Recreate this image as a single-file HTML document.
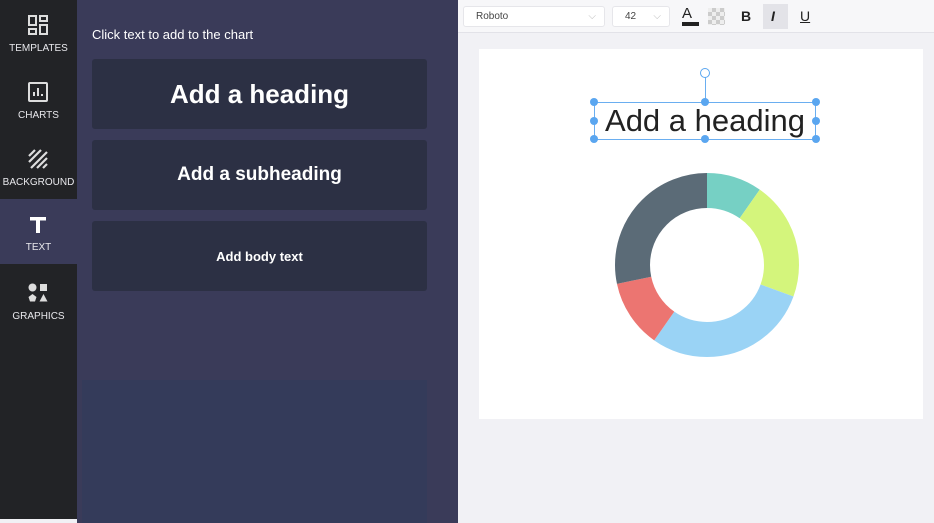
<!DOCTYPE html>
<html><head><style>
*{margin:0;padding:0;box-sizing:border-box}
body{width:934px;height:523px;overflow:hidden;font-family:"Liberation Sans",Arial,sans-serif;background:#f1f1f5;position:relative}
.side{position:absolute;left:0;top:0;width:77px;height:519px;background:#222326}
.item{position:absolute;left:0;width:77px;height:65px;color:#e8e8ec;font-size:10px;text-align:center}
.item .lbl{position:absolute;left:0;right:0;top:43px}
.item svg{position:absolute;left:27px;top:14px}
.panel{position:absolute;left:77px;top:0;width:381px;height:523px;background:#3a3b59}
.low{position:absolute;left:82px;top:380px;width:345px;height:143px;background:#343b5a}
.panel h4{position:absolute;left:15px;top:27px;font-weight:normal;color:#fff;font-size:13px}
.btn{position:absolute;left:15px;width:335px;height:70px;background:#2c3044;border-radius:3px;color:#fff;font-weight:bold;display:flex;align-items:center;justify-content:center}
.tool{position:absolute;left:458px;top:0;width:476px;height:33px;background:#f7f7f9;border-bottom:1px solid #e2e2e8}
.sel{position:absolute;top:6px;height:21px;background:#fff;border:1px solid #e6e6ea;border-radius:3px;font-size:10px;color:#444;padding:4px 0 0 12px}
.canvas{position:absolute;left:479px;top:49px;width:444px;height:370px;background:#fff}
.h{position:absolute;left:594px;top:102px;width:222px;height:38px;border:1px solid #6aaef0;font-size:31px;color:#222;text-align:center;line-height:36px}
.d{position:absolute;width:8px;height:8px;border-radius:50%;background:#5aa6f0}
</style></head><body>
<div class="side">
 <div class="item" style="top:0"><svg width="22" height="22" viewBox="0 0 22 22" fill="none" stroke="#ddd" stroke-width="2"><rect x="2" y="2" width="7" height="9"/><rect x="13" y="2" width="7" height="5"/><rect x="2" y="15" width="7" height="5"/><rect x="13" y="11" width="7" height="9"/></svg><div class="lbl">TEMPLATES</div></div>
 <div class="item" style="top:67px"><svg width="22" height="22" viewBox="0 0 22 22" fill="none" stroke="#ddd" stroke-width="2"><rect x="2" y="2" width="18" height="18" rx="1"/><path d="M7 15v-4M11 15V7M15 15v-2"/></svg><div class="lbl">CHARTS</div></div>
 <div class="item" style="top:134px"><svg width="22" height="22" viewBox="0 0 22 22" stroke="#ddd" stroke-width="2.2"><path d="M2 8l6-6M2 14L14 2M4 20L20 4M10 20l10-10M16 20l4-4"/></svg><div class="lbl">BACKGROUND</div></div>
 <div class="item" style="top:199px;background:#3a3b59"><svg width="22" height="22" viewBox="0 0 22 22"><path d="M3 4h16v3.5h-6V20H9V7.5H3z" fill="#fff"/></svg><div class="lbl">TEXT</div></div>
 <div class="item" style="top:268px"><svg width="22" height="22" viewBox="0 0 22 22" fill="#ddd"><circle cx="5.5" cy="5.5" r="4"/><rect x="13" y="2" width="7" height="7"/><path d="M5.5 12l4 3-1.5 4.5h-5L1.5 15z"/><path d="M16.5 12l4 7.5h-8z"/></svg><div class="lbl">GRAPHICS</div></div>
</div>
<div class="panel">
 <h4>Click text to add to the chart</h4>
 <div class="btn" style="top:59px;font-size:26px">Add a heading</div>
 <div class="btn" style="top:140px;font-size:19px">Add a subheading</div>
 <div class="btn" style="top:221px;font-size:13px">Add body text</div>
</div>
<div class="low"></div>
<div class="tool">
 <div class="sel" style="left:5px;width:142px">Roboto<span style="position:absolute;right:8px;color:#bbb">⌵</span></div>
 <div class="sel" style="left:154px;width:58px">42<span style="position:absolute;right:8px;color:#bbb">⌵</span></div>
 <div style="position:absolute;left:224px;top:5px;font-size:15px;color:#222">A</div>
 <div style="position:absolute;left:224px;top:22px;width:17px;height:4px;background:#222"></div>
 <div style="position:absolute;left:250px;top:8px;width:17px;height:17px;background:repeating-conic-gradient(#ccc 0 25%,#eee 0 50%) 0 0/8px 8px"></div>
 <div style="position:absolute;left:283px;top:8px;font-size:14px;font-weight:bold;color:#222">B</div>
 <div style="position:absolute;left:305px;top:4px;width:25px;height:25px;background:#e3e3e8"></div>
 <div style="position:absolute;left:313px;top:8px;font-size:14px;font-weight:bold;font-style:italic;color:#222">I</div>
 <div style="position:absolute;left:342px;top:8px;font-size:14px;text-decoration:underline;color:#222">U</div>
</div>
<div class="canvas"></div>
<div style="position:absolute;left:705px;top:77px;width:1px;height:25px;background:#6aaef0"></div>
<div style="position:absolute;left:700px;top:68px;width:10px;height:10px;border-radius:50%;border:1.5px solid #5aa6f0;background:#fff"></div>
<div class="h">Add a heading</div>
<div class="d" style="left:590px;top:98px"></div><div class="d" style="left:701px;top:98px"></div><div class="d" style="left:812px;top:98px"></div>
<div class="d" style="left:590px;top:117px"></div><div class="d" style="left:812px;top:117px"></div>
<div class="d" style="left:590px;top:135px"></div><div class="d" style="left:701px;top:135px"></div><div class="d" style="left:812px;top:135px"></div>
<svg style="position:absolute;left:607px;top:165px" width="200" height="200" viewBox="0 0 200 200">
<g transform="rotate(-90 100 100)" fill="none" stroke-width="35">
<circle cx="100" cy="100" r="74.5" stroke="#76d0c4" stroke-dasharray="45.5 468.1" stroke-dashoffset="0"/>
<circle cx="100" cy="100" r="74.5" stroke="#d4f57c" stroke-dasharray="97.5 468.1" stroke-dashoffset="-45.5"/>
<circle cx="100" cy="100" r="74.5" stroke="#9ad3f5" stroke-dasharray="136.5 468.1" stroke-dashoffset="-143"/>
<circle cx="100" cy="100" r="74.5" stroke="#ec7571" stroke-dasharray="56 468.1" stroke-dashoffset="-279.5"/>
<circle cx="100" cy="100" r="74.5" stroke="#5b6b77" stroke-dasharray="132.6 468.1" stroke-dashoffset="-335.5"/>
</g></svg>
</body></html>
